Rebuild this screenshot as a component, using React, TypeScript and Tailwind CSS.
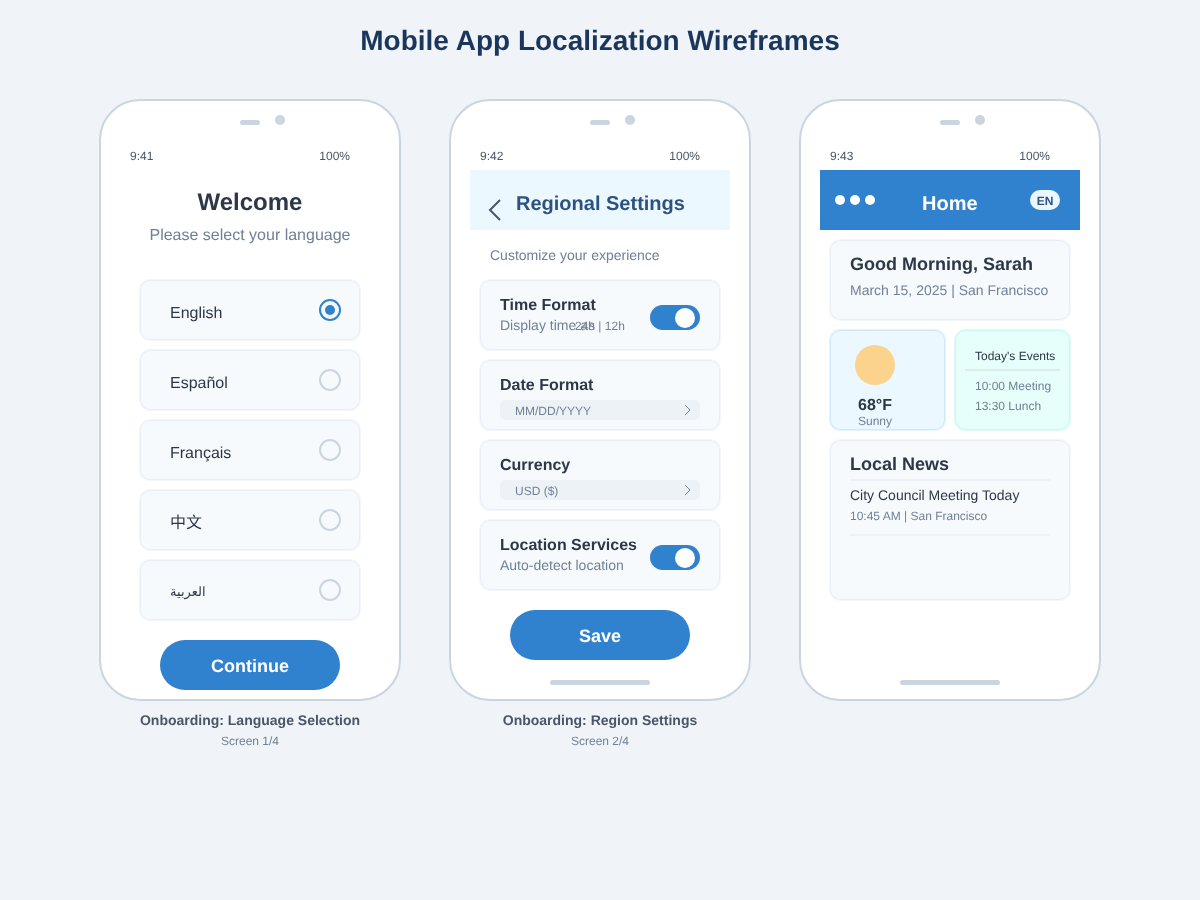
const cardClass = "rounded-[11px] border border-[#f3f6fa] shadow-[inset_0_0_0_1px_#e9eef4] bg-[#f7fafc]";

const Phone = ({ time, children }: { time: string; children: React.ReactNode }) => (
  <div className="flex flex-col w-[302px] h-[602px] rounded-[41px] border-2 border-[#cbd5e0] bg-white overflow-hidden shrink-0">
    <div className="flex items-start gap-[15px] pl-[139px] pt-[14px]">
      <div className="w-5 h-[5px] mt-[5px] rounded-full bg-[#cbd5e0]" />
      <div className="w-2.5 h-2.5 rounded-full bg-[#cbd5e0]" />
    </div>
    <div className="flex justify-between pl-[29px] pr-[49px] mt-[24px] mb-[7px] text-xs leading-[14px] text-[#4a5568]">
      <span>{time}</span>
      <span>100%</span>
    </div>
    {children}
  </div>
);

const HomeBar = () => (
  <div className="mt-auto mb-[14px] mx-auto w-[100px] h-[5px] rounded-full bg-[#cbd5e0]" />
);

const PrimaryButton = ({ label }: { label: string }) => (
  <div className="mx-auto flex items-center justify-center w-[180px] h-[50px] rounded-[25px] bg-[#3182ce] text-lg font-bold leading-[20px] pt-[2px] text-white">
    {label}
  </div>
);

const Radio = ({ selected }: { selected?: boolean }) => (
  <div
    className={`flex items-center justify-center w-[22px] h-[22px] rounded-full border-2 ${
      selected ? "border-[#3182ce]" : "border-[#cbd5e0]"
    }`}
  >
    {selected && <div className="w-2.5 h-2.5 rounded-full bg-[#3182ce]" />}
  </div>
);

const languages = [
  { label: "English", textClass: "mt-[24px] text-base" },
  { label: "Español", textClass: "mt-[24px] text-base" },
  { label: "Français", textClass: "mt-[24px] text-base" },
  { label: "中文", textClass: "mt-[24px] text-base" },
  { label: "العربية", textClass: "mt-[22px] text-[13px]" },
];

const LanguageScreen = () => (
  <Phone time="9:41">
    <div className="flex flex-col flex-1">
      <h2 className="mt-[19px] text-center text-2xl leading-[27px] font-bold text-[#2d3748]">Welcome</h2>
      <p className="mt-[10px] text-center text-base leading-[19px] text-[#718096]">Please select your language</p>
      <div className="flex flex-col gap-2 mt-[34px] mx-[38px]">
        {languages.map((lang, i) => (
          <div
            key={lang.label}
            className={`flex items-center justify-between h-[62px] pl-[30px] pr-[19px] ${cardClass}`}
          >
            <span className={`${lang.textClass} self-start leading-[19px] text-[#2d3748]`}>{lang.label}</span>
            <Radio selected={i === 0} />
          </div>
        ))}
      </div>
      <div className="mt-[19px]">
        <PrimaryButton label="Continue" />
      </div>
    </div>
  </Phone>
);

const Toggle = () => (
  <div className="flex items-center justify-end w-[50px] h-[25px] mt-[25px] pr-[5px] rounded-full bg-[#3182ce]">
    <div className="w-5 h-5 rounded-full bg-white" />
  </div>
);

const SettingCard = ({ children }: { children: React.ReactNode }) => (
  <div className={`h-[72px] px-[20px] ${cardClass}`}>{children}</div>
);

const ToggleSetting = ({ title, sub, extra }: { title: string; sub: string; extra?: string }) => (
  <SettingCard>
    <div className="flex items-start justify-between h-full">
      <div className="relative flex flex-col pt-[16px]">
        <span className="text-base leading-[19px] font-bold text-[#2d3748]">{title}</span>
        <span className="mt-[2px] text-sm leading-[16px] text-[#718096]">{sub}</span>
        {extra && (
          <span className="absolute left-[75px] top-[39px] whitespace-nowrap text-xs leading-[14px] text-[#718096]">
            {extra}
          </span>
        )}
      </div>
      <Toggle />
    </div>
  </SettingCard>
);

const SelectSetting = ({ title, value }: { title: string; value: string }) => (
  <SettingCard>
    <div className="flex flex-col pt-[16px]">
      <span className="text-base leading-[19px] font-bold text-[#2d3748]">{title}</span>
      <div className="flex items-center justify-between h-5 mt-[5px] pl-[15px] pr-[9px] rounded-[5px] bg-[#edf2f7]">
        <span className="text-xs leading-[14px] pt-[2px] text-[#718096]">{value}</span>
        <svg width="8" height="12" viewBox="0 0 8 12" fill="none" stroke="#718096" strokeWidth="1">
          <path d="M2 1 L7 6 L2 11" />
        </svg>
      </div>
    </div>
  </SettingCard>
);

const RegionScreen = () => (
  <Phone time="9:42">
    <div className="flex flex-col flex-1">
      <div className="flex items-center h-[60px] mx-[19px] bg-[#ebf8ff]">
        <svg className="ml-[18px] mt-[20px] shrink-0" width="14" height="24" viewBox="0 0 14 24" fill="none" stroke="#4a5568" strokeWidth="2">
          <path d="M12 2 L2 12 L12 22" />
        </svg>
        <h2 className="ml-[14px] text-xl leading-[22px] pt-[8px] font-bold text-[#2c5282]">Regional Settings</h2>
      </div>
      <p className="mt-[17px] ml-[39px] text-sm leading-[16px] text-[#718096]">Customize your experience</p>
      <div className="flex flex-col gap-2 mt-[16px] mx-[28px]">
        <ToggleSetting title="Time Format" sub="Display time as" extra="24h | 12h" />
        <SelectSetting title="Date Format" value="MM/DD/YYYY" />
        <SelectSetting title="Currency" value="USD ($)" />
        <ToggleSetting title="Location Services" sub="Auto-detect location" />
      </div>
      <div className="mt-[19px]">
        <PrimaryButton label="Save" />
      </div>
      <HomeBar />
    </div>
  </Phone>
);

const HomeScreen = () => (
  <Phone time="9:43">
    <div className="flex flex-col flex-1">
      <div className="flex items-center h-[60px] mx-[19px] pl-[15px] pr-5 bg-[#3182ce]">
        <div className="flex gap-[5px]">
          <div className="w-2.5 h-2.5 rounded-full bg-white" />
          <div className="w-2.5 h-2.5 rounded-full bg-white" />
          <div className="w-2.5 h-2.5 rounded-full bg-white" />
        </div>
        <h2 className="ml-[47px] pt-[8px] text-xl leading-[22px] font-bold text-white">Home</h2>
        <div className="flex items-center justify-center ml-auto w-[30px] h-5 pt-[2px] rounded-full bg-[#ebf8ff] text-xs leading-[14px] font-bold text-[#2c5282]">
          EN
        </div>
      </div>
      <div className="flex flex-col gap-2 mt-[9px] mx-[28px]">
        <div className={`h-[82px] pl-[20px] pt-[14px] ${cardClass}`}>
          <h3 className="text-lg leading-[20px] font-bold text-[#2d3748]">Good Morning, Sarah</h3>
          <p className="mt-[8px] text-sm leading-[16px] text-[#718096]">March 15, 2025 | San Francisco</p>
        </div>
        <div className="flex gap-2">
          <div className="flex flex-col items-start w-[117px] h-[102px] pl-[25px] pt-[15px] rounded-[11px] border border-[#e4f3fc] shadow-[inset_0_0_0_1px_#cfe9fb] bg-[#ebf8ff]">
            <div className="w-10 h-10 rounded-full bg-[#fbd38d]" />
            <div className="w-10 flex flex-col items-center">
              <span className="mt-[11px] text-base leading-[19px] font-bold text-[#2d3748]">68°F</span>
              <span className="-mt-px text-xs leading-[14px] text-[#718096]">Sunny</span>
            </div>
          </div>
          <div className="flex flex-col w-[117px] h-[102px] pt-[19px] rounded-[11px] border border-[#e0fbf6] shadow-[inset_0_0_0_1px_#c6f9f0] bg-[#e6fffa]">
            <span className="ml-[20px] text-xs leading-[14px] text-[#2d3748]">Today's Events</span>
            <div className="mt-[6px] mx-[10px] h-0.5 bg-[#dfeaef]" />
            <span className="mt-[5px] ml-[20px] text-xs leading-[20px] text-[#718096]">10:00 Meeting</span>
            <span className="ml-[20px] text-xs leading-[20px] text-[#718096]">13:30 Lunch</span>
          </div>
        </div>
        <div className={`h-[162px] px-[20px] pt-[14px] ${cardClass}`}>
          <h3 className="text-lg leading-[20px] font-bold text-[#2d3748]">Local News</h3>
          <div className="mt-[5px] h-0.5 bg-[#edf2f7]" />
          <p className="mt-[6px] text-sm leading-[16px] text-[#2d3748]">City Council Meeting Today</p>
          <p className="mt-[6px] text-xs leading-[14px] text-[#718096]">10:45 AM | San Francisco</p>
          <div className="mt-[11px] h-0.5 bg-[#edf2f7]" />
        </div>
      </div>
      <HomeBar />
    </div>
  </Phone>
);

const Caption = ({ title, sub }: { title: string; sub: string }) => (
  <div className="flex flex-col items-center w-[302px] mt-[11px]">
    <span className="text-sm leading-[16px] font-bold text-[#4a5568]">{title}</span>
    <span className="mt-[6px] text-xs leading-[14px] text-[#718096]">{sub}</span>
  </div>
);

export default function App() {
  return (
    <div className="w-[1200px] h-[900px] overflow-hidden bg-[#f0f4f8] will-change-transform [text-rendering:geometricPrecision] font-['Liberation_Sans','Noto_Sans_CJK_SC',sans-serif]">
      <h1 className="pt-[25px] text-center text-[28px] leading-[31px] font-bold text-[#1a365d]">
        Mobile App Localization Wireframes
      </h1>
      <div className="flex gap-[48px] mt-[43px] pl-[99px]">
        <div>
          <LanguageScreen />
          <Caption title="Onboarding: Language Selection" sub="Screen 1/4" />
        </div>
        <div>
          <RegionScreen />
          <Caption title="Onboarding: Region Settings" sub="Screen 2/4" />
        </div>
        <HomeScreen />
      </div>
    </div>
  );
}
